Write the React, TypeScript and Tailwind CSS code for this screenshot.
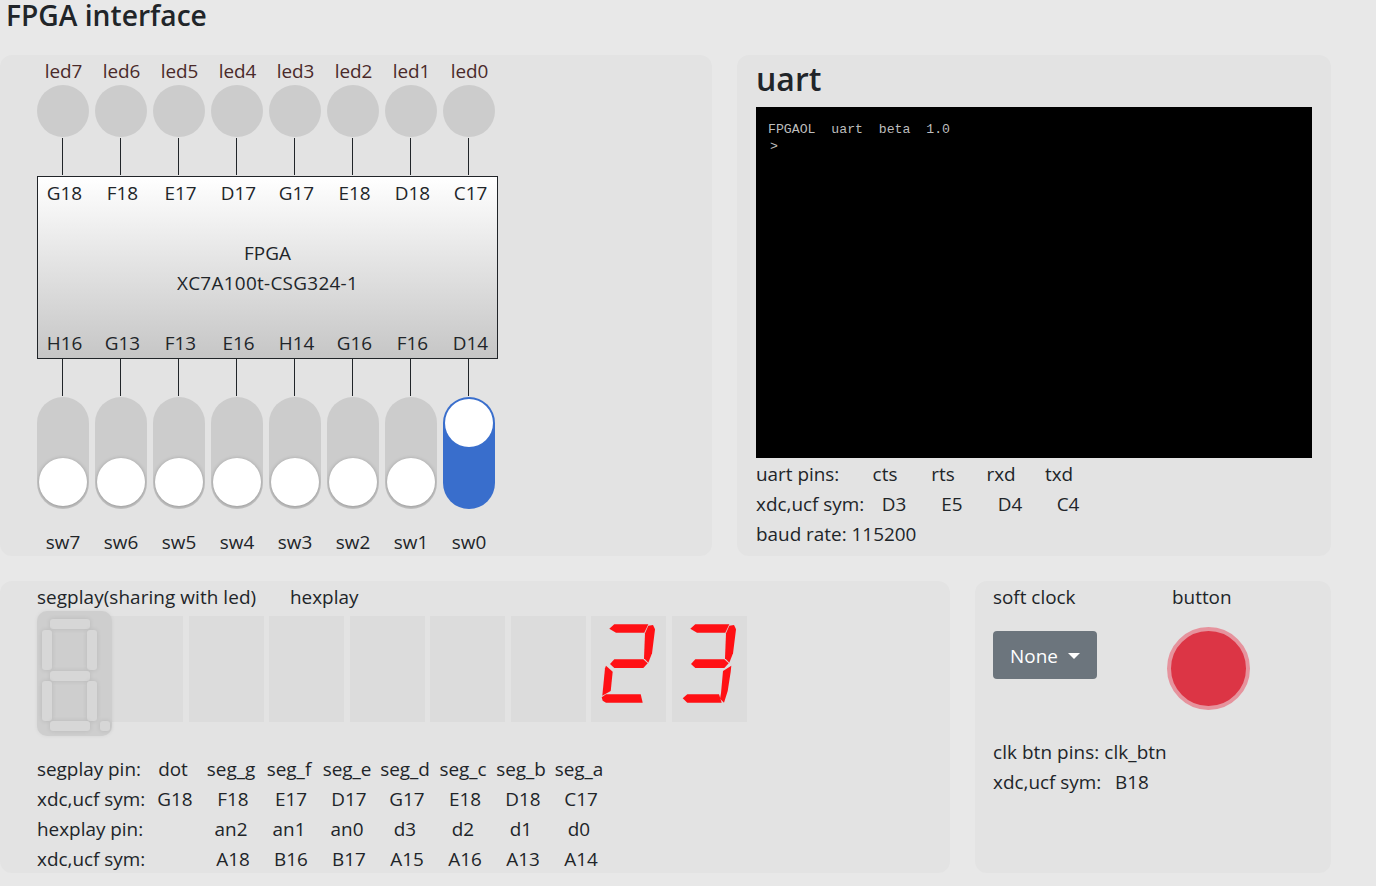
const leds = ["led7", "led6", "led5", "led4", "led3", "led2", "led1", "led0"]
const topPins = ["G18", "F18", "E17", "D17", "G17", "E18", "D18", "C17"]
const bottomPins = ["H16", "G13", "F13", "E16", "H14", "G16", "F16", "D14"]
const switches = ["sw7", "sw6", "sw5", "sw4", "sw3", "sw2", "sw1", "sw0"]

const pinTable = [
    ["segplay pin:", "dot", "seg_g", "seg_f", "seg_e", "seg_d", "seg_c", "seg_b", "seg_a"],
    ["xdc,ucf sym:", "G18", "F18", "E17", "D17", "G17", "E18", "D18", "C17"],
    ["hexplay pin:", "", "an2", "an1", "an0", "d3", "d2", "d1", "d0"],
    ["xdc,ucf sym:", "", "A18", "B16", "B17", "A15", "A16", "A13", "A14"],
]

const SEG_TOP = "18.3,12.7 23.3,8.3 57.3,8.3 53.3,16.7 25,16.7"
const SEG_UPPER_RIGHT = "57.3,9.7 62,9 64,13.3 61,37.3 57.3,46.7 53,42.3 54,17.3"
const SEG_MIDDLE = "19,48 23.3,43.3 52.3,43.3 56.7,47.3 52.3,52 23.3,52"

function Digit({ segments }: { segments?: string[] }) {
    return (
        <div className="w-[75px] h-[106px] bg-[#dcdcdc] shrink-0">
            {segments && (
                <svg width="75" height="106" viewBox="0 0 75 106" fill="#ff1014">
                    {segments.map(s => <polygon key={s} points={s} />)}
                </svg>
            )}
        </div>
    )
}

function Switch({ on }: { on: boolean }) {
    return (
        <div className={`relative w-[52px] h-[112px] rounded-full overflow-hidden ${on ? "bg-[#396ecc]" : "bg-[#cccccc]"}`}>
            {on
                ? <div className="absolute left-[2px] top-[2px] w-[48px] h-[48px] rounded-full bg-white" />
                : <div className="absolute left-[2px] top-[61px] w-[48px] h-[48px] rounded-full bg-white shadow-[0_1px_4px_rgba(0,0,0,0.3)]" />}
        </div>
    )
}

function SegmentMap() {
    const seg = "absolute bg-[#d7d7d7] rounded-[3px] shadow-[0_0_5px_rgba(0,0,0,0.1)]"
    return (
        <div className="absolute left-[37px] top-[30px] w-[75px] h-[125px] rounded-[10px] bg-[#cecece] shadow-[0_0_4px_rgba(0,0,0,0.06)]">
            <div className={`${seg} left-[13px] top-[8px] w-[40px] h-[10px]`} />
            <div className={`${seg} left-[5px] top-[19px] w-[10px] h-[40px]`} />
            <div className={`${seg} left-[50px] top-[19px] w-[10px] h-[40px]`} />
            <div className={`${seg} left-[13px] top-[60px] w-[40px] h-[10px]`} />
            <div className={`${seg} left-[5px] top-[70px] w-[10px] h-[40px]`} />
            <div className={`${seg} left-[50px] top-[70px] w-[10px] h-[40px]`} />
            <div className={`${seg} left-[13px] top-[110px] w-[40px] h-[10px]`} />
            <div className={`${seg} left-[63px] top-[110px] w-[10px] h-[10px] rounded-[1px]`} />
        </div>
    )
}

export default function App() {
    return (
        <div className="w-[1376px] h-[886px] overflow-hidden bg-[#e8e8e8] text-[#212529] text-[18.9px] leading-[30px] font-['Open_Sans',sans-serif] whitespace-nowrap">
            <h1 className="h-[55px] pl-[6px] text-[28.2px] leading-[30px] font-semibold">FPGA interface</h1>

            <div className="flex w-[1331px] gap-[25px]">
                <div className="w-[712px] h-[501px] bg-[#e3e3e3] rounded-[12px] pl-[37px] pt-px">
                    <div className="flex h-[29px]">
                        {leds.map(l => <div key={l} className="w-[58px] pr-[5px] text-center text-[#4a2a2a]">{l}</div>)}
                    </div>
                    <div className="flex h-[52px]">
                        {leds.map(l => <div key={l} className="w-[58px]"><div className="w-[52px] h-[52px] rounded-full bg-[#cccccc]" /></div>)}
                    </div>
                    <div className="flex h-[39px] pt-px">
                        {leds.map(l => <div key={l} className="w-[58px]"><div className="ml-[25px] w-px h-[37px] bg-[#212529]" /></div>)}
                    </div>
                    <div className="w-[461px] h-[183px] border border-[#212529] bg-gradient-to-b from-white to-[#c6c6c6] flex flex-col justify-between pt-px">
                        <div className="flex">
                            {topPins.map(p => <div key={p} className="w-[58px] shrink-0 pr-[5px] text-center">{p}</div>)}
                        </div>
                        <div className="text-center">
                            <div>FPGA</div>
                            <div className="tracking-[0.3px]">XC7A100t-CSG324-1</div>
                        </div>
                        <div className="flex">
                            {bottomPins.map(p => <div key={p} className="w-[58px] shrink-0 pr-[5px] text-center">{p}</div>)}
                        </div>
                    </div>
                    <div className="flex h-[38px]">
                        {bottomPins.map(p => <div key={p} className="w-[58px]"><div className="ml-[25px] w-px h-[37px] bg-[#212529]" /></div>)}
                    </div>
                    <div className="flex h-[112px]">
                        {switches.map((s, i) => <div key={s} className="w-[58px]"><Switch on={i === 7} /></div>)}
                    </div>
                    <div className="flex mt-[18px]">
                        {switches.map(s => <div key={s} className="w-[58px] pr-[6px] text-center">{s}</div>)}
                    </div>
                </div>

                <div className="w-[594px] h-[501px] bg-[#e3e3e3] rounded-[12px] pl-[19px]">
                    <h2 className="h-[52px] text-[32px] leading-[47px] font-semibold">uart</h2>
                    <div className="w-[556px] h-[351px] bg-black pl-[12px] pt-[14px] text-[#bdbdbd] text-[13.2px] leading-[17px] font-['Liberation_Mono',monospace] whitespace-pre">
                        <div>FPGAOL  uart  beta  1.0</div>
                        <div className="pl-[2px]">&gt;</div>
                    </div>
                    <div className="grid grid-cols-[100px_repeat(4,58px)] mt-px text-center">
                        <div className="text-left">uart pins:</div>
                        <div>cts</div><div>rts</div><div>rxd</div><div>txd</div>
                    </div>
                    <div className="grid grid-cols-[109px_repeat(4,58px)] text-center">
                        <div className="text-left">xdc,ucf sym:</div>
                        <div>D3</div><div>E5</div><div>D4</div><div>C4</div>
                    </div>
                    <div>baud rate: 115200</div>
                </div>
            </div>

            <div className="flex w-[1331px] gap-[25px] mt-[25px]">
                <div className="relative w-[950px] h-[292px] bg-[#e3e3e3] rounded-[12px] pt-px">
                    <div className="flex pl-[37px]">
                        <div className="w-[253px] tracking-[0.08px]">segplay(sharing with led)</div>
                        <div>hexplay</div>
                    </div>
                    <div className="flex gap-[5.5px] pl-[108px] mt-[4px]">
                        <Digit />
                        <Digit />
                        <Digit />
                        <Digit />
                        <Digit />
                        <Digit />
                        <Digit segments={[SEG_TOP, SEG_UPPER_RIGHT, SEG_MIDDLE, "15,49.7 21.7,55.7 19.7,75 11.3,79.7 14,52.3", "10.7,81.3 15,78.3 49.7,78.3 51.7,86.7 15,86.7 11.7,84.7"]} />
                        <Digit segments={[SEG_TOP, SEG_UPPER_RIGHT, SEG_MIDDLE, "59.3,49.7 58.7,55.7 55.7,75 52,86.7 48,82.7 49,77 51,55", "10.7,82.3 15.3,78.3 47,78.3 49.7,86.7 15.3,86.7"]} />
                    </div>
                    <SegmentMap />
                    <div className="mt-[32px] pl-[37px]">
                        {pinTable.map((row, i) => (
                            <div key={i} className={`grid text-center ${i % 2 === 1 ? "grid-cols-[109px_repeat(8,58px)]" : "grid-cols-[107px_repeat(8,58px)]"}`}>
                                {row.map((c, j) => <div key={j} className={j === 0 ? "text-left" : ""}>{c}</div>)}
                            </div>
                        ))}
                    </div>
                </div>

                <div className="w-[356px] h-[292px] bg-[#e3e3e3] rounded-[12px] pl-[18px] pt-px">
                    <div className="flex">
                        <div className="w-[179px]">soft clock</div>
                        <div>button</div>
                    </div>
                    <div className="flex items-start mt-[15px] h-[83px]">
                        <button className="flex items-center justify-center gap-[10px] w-[104px] h-[48px] mt-[4px] pt-px rounded-[4px] bg-[#6c757d] text-white">
                            None
                            <span className="w-0 h-0 border-x-[6px] border-x-transparent border-t-[6px] border-t-white" />
                        </button>
                        <div className="ml-[70px] w-[83px] h-[83px] rounded-full bg-[#dc3545] border-[4px] border-[#e6939d]" />
                    </div>
                    <div className="mt-[27px] tracking-[0.08px]">clk btn pins: clk_btn</div>
                    <div className="flex">
                        <div className="w-[122px]">xdc,ucf sym:</div>
                        <div>B18</div>
                    </div>
                </div>
            </div>
        </div>
    )
}
